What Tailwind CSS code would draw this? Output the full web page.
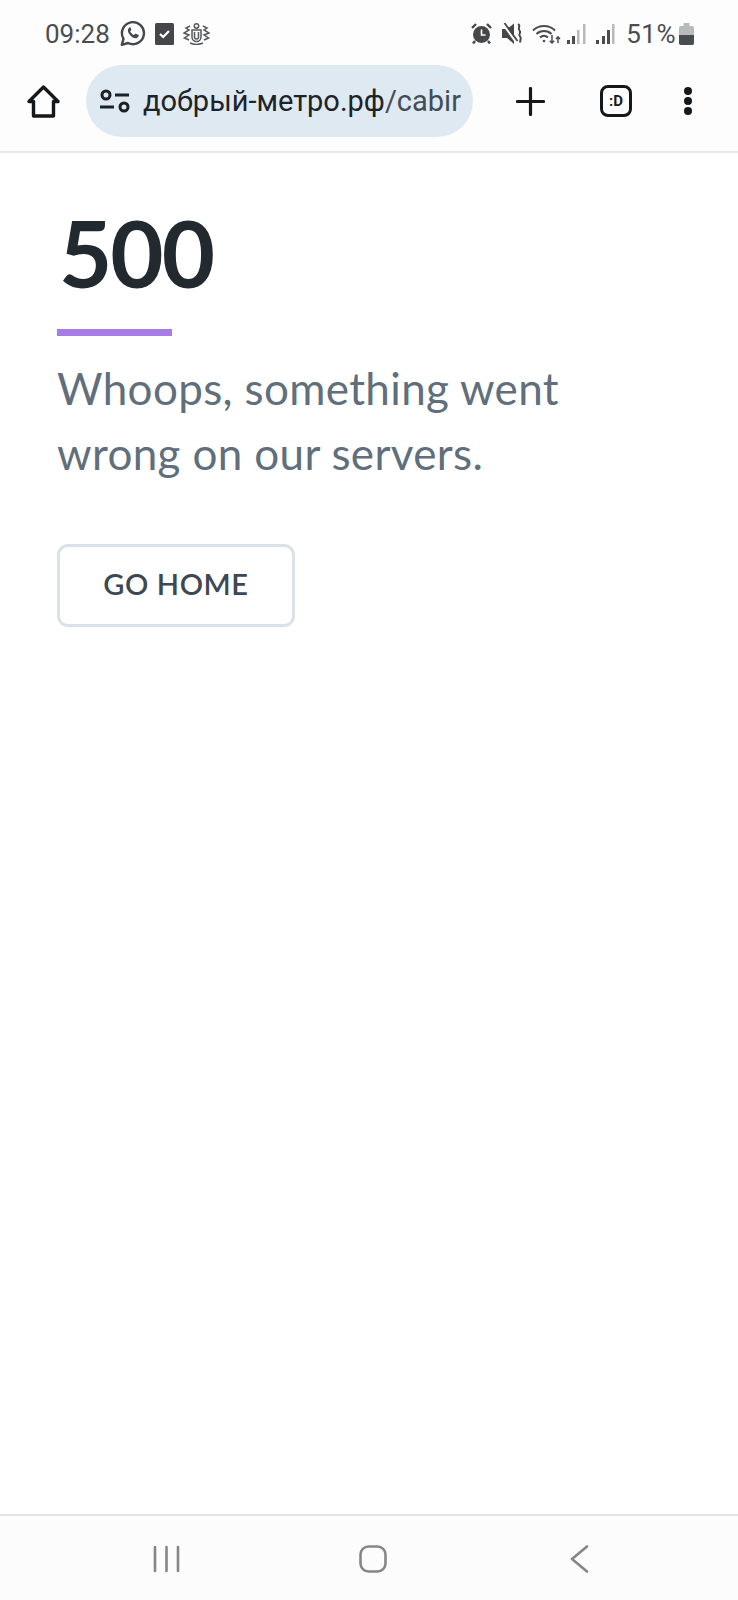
<!DOCTYPE html>
<html lang="ru">
<head>
<meta charset="utf-8">
<title>500</title>
<script src="https://cdn.jsdelivr.net/npm/@tailwindcss/browser@4"></script>
</head>
<body class="bg-white font-['Roboto',sans-serif]">
<div class="flex h-[1600px] w-[738px] flex-col overflow-hidden">
  <header class="h-[153px] shrink-0 border-b-2 border-[#e7e7ef] bg-[#fdfdfe]">
    <div class="flex h-[65px] items-center justify-between pl-[45px] pr-[44px] pt-[2px] text-[#4a4d50]">
      <div class="flex items-center">
        <span class="text-[26px] leading-[30px]">09:28</span>
        <svg class="ml-[10px]" width="26" height="25" viewBox="0 0 26 25" fill="none" stroke="#45484a"><path d="M1.800 23.800l1.700-6A11 11 0 1 1 8 22z" stroke-width="2.400" stroke-linejoin="round"/><path d="M9 7c-1.800 1.500-1.400 4.300 1 7 2.300 2.700 5 3.800 6.800 3 1.700-.7 2.100-2.200 1.800-2.900l-3.200-1.500-1.300 1.500c-1.700-.6-3.300-2.300-3.900-3.900l1.200-1.400-1.300-3z" fill="#45484a" stroke="none"/></svg>
        <svg class="ml-[9px]" width="19" height="22" viewBox="0 0 19 22"><rect width="19" height="22" rx="1.500" fill="#45484a"/><path d="M5 11l3.200 3 5.800-6" fill="none" stroke="#fff" stroke-width="2.200"/></svg>
        <svg class="ml-[9px]" width="27" height="22" viewBox="0 0 27 22" fill="none" stroke="#56595c" stroke-width="1.500"><circle cx="13.500" cy="3" r="2.200"/><path d="M9 7h9v7a4.500 4.500 0 0 1-9 0zM11.500 9v5a2 2 0 0 0 4 0V9"/><path d="M7 3L3 5l3 2-5 3 5 2-4.500 3L6 17M20 3l4 2-3 2 5 3-5 2 4.500 3L21 17M7 20c4 1.800 9 1.800 13 0"/></svg>
      </div>
      <div class="flex items-center">
        <svg width="21" height="21" viewBox="0 0 21 21"><path d="M1 5l4-4M20 5l-4-4M4 18l-2 2.500M17 18l2 2.500" stroke="#45484a" stroke-width="2.400"/><circle cx="10.500" cy="11.500" r="8.500" fill="#45484a"/><path d="M10.500 6.500v5.500h4" fill="none" stroke="#fff" stroke-width="1.600"/></svg>
        <svg class="ml-[10px]" width="21" height="21" viewBox="0 0 21 21"><path d="M0 6h5l7-5.500V21l-7-6H0z" fill="#45484a"/><path d="M1 1l13 18" stroke="#fdfdfe" stroke-width="2.200"/><path d="M2.500 0l13 18" stroke="#45484a" stroke-width="1.800"/><path d="M16 1c3.500 2-1 4 1.500 6.500s-2 3.500.5 6 -1 3 .5 6" fill="none" stroke="#45484a" stroke-width="2"/></svg>
        <svg class="ml-[9px]" width="29" height="21" viewBox="0 0 29 21" fill="none" stroke="#4a4d50" stroke-width="2"><path d="M1 7.500c6-6 16-6 22 0M4.500 11c4-4 11-4 15 0M8 14.500c2.300-2.200 5.700-2.200 8 0"/><circle cx="12" cy="18" r="1.300" fill="#4a4d50" stroke="none"/><path d="M20 12v8M17.800 17.800L20 20l2.200-2.200M26 20v-6M24 16l2-2.200 2 2.200" stroke-width="1.500"/></svg>
        <svg class="ml-[6px]" width="19" height="21" viewBox="0 0 19 21"><rect x="0" y="17" width="3" height="4" fill="#4a4d50"/><rect x="5" y="13" width="3" height="8" fill="#4a4d50"/><rect x="10" y="7" width="2.500" height="14" fill="#b8b9bb"/><rect x="16" y="1" width="2.500" height="20" fill="#b8b9bb"/></svg>
        <svg class="ml-[10px]" width="19" height="21" viewBox="0 0 19 21"><rect x="0" y="17" width="3" height="4" fill="#4a4d50"/><rect x="6" y="13" width="3" height="8" fill="#4a4d50"/><rect x="11" y="7" width="3" height="14" fill="#4a4d50"/><rect x="16" y="1" width="2.500" height="20" fill="#b8b9bb"/></svg>
        <span class="ml-[11px] text-[26px] leading-[30px] tracking-[0.5px]">51%</span>
        <svg class="ml-[3px]" width="15" height="22" viewBox="0 0 15 22"><path d="M4.500 0h6v3H13a2 2 0 0 1 2 2v15a2 2 0 0 1-2 2H2a2 2 0 0 1-2-2V5a2 2 0 0 1 2-2h2.500z" fill="#b9babc"/><path d="M0 12h15v8a2 2 0 0 1-2 2H2a2 2 0 0 1-2-2z" fill="#4a4d50"/></svg>
      </div>
    </div>
    <div class="flex items-center pl-[27px]">
      <svg width="33" height="33" viewBox="0 0 33 33" fill="none" stroke="#15181a" stroke-width="3.400" stroke-linejoin="round" stroke-linecap="round"><path d="M2 16.500L16.500 2 31 16.500h-4.500V31h-20V16.500z"/></svg>
      <div class="ml-[26px] flex h-[72px] w-[387px] items-center rounded-full bg-[#dfe9f2] pl-[13px] pr-[6px]">
        <svg class="shrink-0" width="32" height="25" viewBox="0 0 32 25" fill="none" stroke="#1d2124" stroke-width="3"><circle cx="7" cy="6" r="4"/><circle cx="25" cy="18" r="4"/><path d="M16 6h14M1 18h14"/></svg>
        <div class="ml-[12px] whitespace-nowrap text-[29px] leading-[36px] text-[#1d2327]">добрый-метро.рф<span class="text-[#414d55]">/cabir</span></div>
      </div>
      <svg class="ml-[43px]" width="29" height="29" viewBox="0 0 29 29" fill="none" stroke="#15181a" stroke-width="3.200" stroke-linecap="round"><path d="M14.500 1.500v26M1.500 14.500h26"/></svg>
      <div class="ml-[55px] flex h-[32px] w-[32px] items-center justify-center rounded-[8px] border-[3.500px] border-[#15181a] text-[15px] font-bold leading-none text-[#15181a]">:D</div>
      <div class="ml-[52px] flex h-[28px] flex-col justify-between">
        <span class="block h-[8px] w-[8px] rounded-full bg-[#15181a]"></span>
        <span class="block h-[8px] w-[8px] rounded-full bg-[#15181a]"></span>
        <span class="block h-[8px] w-[8px] rounded-full bg-[#15181a]"></span>
      </div>
    </div>
  </header>
  <main class="flex-1 pl-[57px]">
    <h1 class="ml-[2px] mt-[50px] font-['Lato',sans-serif] text-[92px] font-bold leading-[100px] tracking-[-2px] text-[#22292f]">500</h1>
    <div class="mt-[26px] h-[7px] w-[115px] bg-[#a67de6]"></div>
    <p class="mt-[20px] w-[560px] font-['Lato',sans-serif] text-[44px] leading-[65px] tracking-[0.35px] text-[#606f7b]">Whoops, something went wrong on our servers.</p>
    <a class="mt-[58px] flex h-[83px] w-[238px] items-center justify-center rounded-[11px] border-[3px] border-[#dae1e7] pb-[3px] font-['Lato',sans-serif] text-[29px] font-semibold tracking-[0.6px] text-[#3d4852]">GO HOME</a>
  </main>
  <footer class="flex h-[86px] shrink-0 items-start border-t-2 border-[#e3e3ec] bg-[#fcfcfc] pt-[29px]">
    <svg class="ml-[153px]" width="27" height="28" viewBox="0 0 27 28" stroke="#848688" stroke-width="2.600" stroke-linecap="round"><path d="M2 2v24M13.500 2v24M25 2v24"/></svg>
    <svg class="ml-[179px]" width="28" height="28" viewBox="0 0 28 28" fill="none" stroke="#848688" stroke-width="2.600"><rect x="1.500" y="1.500" width="25" height="25" rx="8"/></svg>
    <svg class="ml-[183px]" width="19" height="28" viewBox="0 0 19 28" fill="none" stroke="#848688" stroke-width="2.600" stroke-linecap="round" stroke-linejoin="round"><path d="M17 1.500L2 14l15 12.500"/></svg>
  </footer>
</div>
</body>
</html>
